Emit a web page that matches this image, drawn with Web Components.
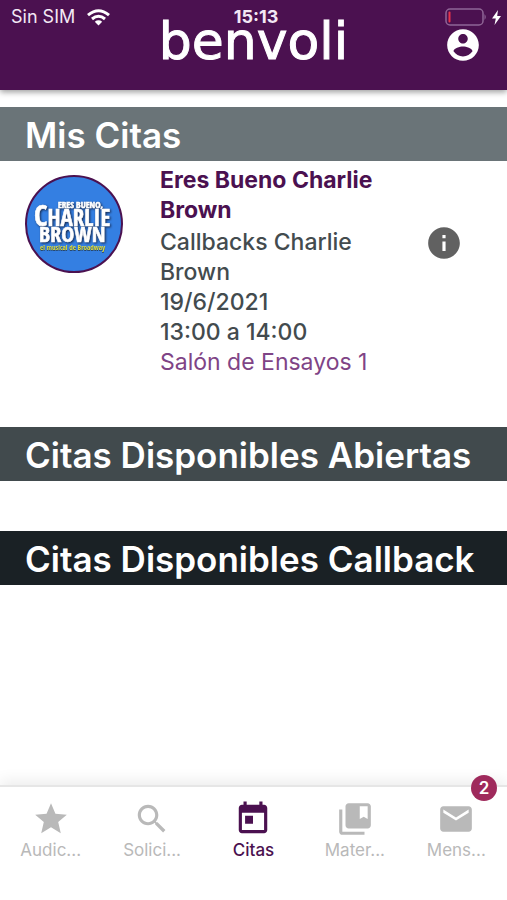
<!DOCTYPE html>
<html lang="es">
<head>
<meta charset="utf-8">
<meta name="viewport" content="width=device-width, initial-scale=1">
<title>benvoli - Citas</title>
<style>
    body {
        margin: 0;
        background: #ffffff;
        font-family: Inter, "Liberation Sans", sans-serif;
    }
</style>
</head>
<body>
<app-citas></app-citas>

<script>
// Barra de estado del teléfono
class BarraEstado extends HTMLElement {
    connectedCallback() {
        const shadowRoot = this.attachShadow({ mode: 'open' });
        shadowRoot.innerHTML = `
            <style>
                :host {
                    display: grid;
                    grid-template-columns: 1fr auto 1fr;
                    align-items: center;
                    height: 34px;
                    padding: 0 6px 0 11px;
                    font-size: 18px;
                    line-height: 18px;
                    color: #f3e8f5;
                }
                div { display: flex; align-items: center; gap: 12px; }
                .hora { font-weight: 700; }
                .pila { justify-content: flex-end; gap: 5px; }
                svg { display: block; }
            </style>
            <div>
                <span>Sin SIM</span>
                <svg width="23" height="17" viewBox="0 0 23 17" fill="none" stroke="#fff" stroke-width="3">
                    <path d="M1 6.2 Q11.500 -2.800 22 6.200"/>
                    <path d="M5 10 Q11.500 4.500 18 10"/>
                    <path d="M11.500 16.500 L7.800 12.700 Q11.500 9.800 15.200 12.700 Z" fill="#fff" stroke="none"/>
                </svg>
            </div>
            <span class="hora">15:13</span>
            <div class="pila">
                <svg width="42" height="18" viewBox="0 0 42 18">
                    <rect x="1" y="1" width="37" height="16" rx="4" fill="none" stroke="#8f6696" stroke-width="1.5"/>
                    <rect x="3.500" y="3.500" width="2" height="11" rx="1" fill="#e8334a"/>
                    <path d="M39.500 6 Q42 9 39.500 12 Z" fill="#8f6696"/>
                </svg>
                <svg width="9" height="15" viewBox="0 0 9 15"><path d="M6 0 L0 8.500 H3.800 L2.500 15 L9 6 H5.200 Z" fill="#fff"/></svg>
            </div>
        `;
    }
}
customElements.define("barra-estado", BarraEstado);

// Cabecera con el logo y el botón de perfil
class CabeceraApp extends HTMLElement {
    connectedCallback() {
        const shadowRoot = this.attachShadow({ mode: 'open' });
        shadowRoot.innerHTML = `
            <style>
                :host {
                    display: block;
                    position: relative;
                    z-index: 1;
                    background: #4b1150;
                    box-shadow: 0 2px 6px rgba(0, 0, 0, 0.4);
                }
                /* el estado flota sobre la cabecera */
                barra-estado { position: absolute; top: 0; left: 0; right: 0; }
                header {
                    display: grid;
                    grid-template-columns: 1fr auto 1fr;
                    align-items: center;
                    box-sizing: border-box;
                    height: 90px;
                    padding: 0 25px 8px;
                }
                .logo {
                    grid-column: 2;
                    font: 52px/60px "DejaVu Sans", sans-serif;
                    color: #ffffff;
                    -webkit-text-stroke: 1px #ffffff;
                }
                button {
                    justify-self: end;
                    margin-top: 8px;
                    padding: 0;
                    border: none;
                    background: none;
                    cursor: pointer;
                }
                svg { display: block; fill: #ffffff; }
            </style>
            <header>
                <span class="logo">benvoli</span>
                <button aria-label="Perfil">
                    <svg width="38" height="38" viewBox="0 0 24 24"><path d="M12 2C6.480 2 2 6.480 2 12s4.480 10 10 10 10-4.480 10-10S17.520 2 12 2zm0 3c1.660 0 3 1.340 3 3s-1.340 3-3 3-3-1.340-3-3 1.340-3 3-3zm0 14.200c-2.500 0-4.710-1.280-6-3.220.030-1.990 4-3.080 6-3.080 1.990 0 5.970 1.090 6 3.080-1.290 1.940-3.500 3.220-6 3.220z"/></svg>
                </button>
            </header>
            <barra-estado></barra-estado>
        `;
    }
}
customElements.define("cabecera-app", CabeceraApp);

// Franja con el título de cada sección
class TituloSeccion extends HTMLElement {
    connectedCallback() {
        const shadowRoot = this.attachShadow({ mode: 'open' });
        shadowRoot.innerHTML = `
            <style>
                :host { display: block; background: var(--fondo, #6a7478); }
                h2 {
                    margin: 0;
                    padding: 2px 25px 0;
                    font-size: 35px;
                    font-weight: 600;
                    line-height: 52px;
                    white-space: nowrap;
                    color: #ffffff;
                }
            </style>
            <h2><slot></slot></h2>
        `;
    }
}
customElements.define("titulo-seccion", TituloSeccion);

// Cartel redondo de la obra
class CartelObra extends HTMLElement {
    connectedCallback() {
        const shadowRoot = this.attachShadow({ mode: 'open' });
        shadowRoot.innerHTML = `
            <style>
                :host { display: block; }
                svg { display: block; font-family: "Liberation Sans Narrow", "Open Sans Condensed", "Liberation Sans", sans-serif; font-weight: bold; }
                .blanco { fill: #ffffff; stroke: #ffffff; stroke-width: 0.6; filter: drop-shadow(1px 1px 1px #17284b); }
                .lema { fill: #e2df3c; filter: drop-shadow(0 1px 0 #27405a); }
            </style>
            <svg width="98" height="98" viewBox="0 0 98 98">
                <circle cx="49" cy="49" r="48" fill="#347fe2" stroke="#4b1150" stroke-width="2"/>
                <g class="blanco">
                    <text x="33" y="33" font-size="9">ERES BUENO,</text>
                    <text x="9" y="51" font-size="23"><tspan font-size="29">C</tspan>HARLIE</text>
                    <text x="14" y="67" font-size="22">BROWN</text>
                </g>
                <text class="lema" x="15" y="75" font-size="7">el musical de Broadway</text>
            </svg>
        `;
    }
}
customElements.define("cartel-obra", CartelObra);

// Ficha de una cita
class FichaCita extends HTMLElement {
    connectedCallback() {
        const shadowRoot = this.attachShadow({ mode: 'open' });
        shadowRoot.innerHTML = `
            <style>
                :host {
                    display: grid;
                    grid-template-columns: 98px 1fr 57px;
                    column-gap: 37px;
                    align-items: start;
                    padding: 4px 25px 50px;
                    font-size: 23px;
                    line-height: 30px;
                    color: #434b4e;
                }
                cartel-obra { margin-top: 10px; }
                h3, p { margin: 0; font-size: inherit; }
                h3 { margin-bottom: 2px; font-weight: 700; color: #4b1150; }
                p { font-weight: 500; }
                .lugar { font-weight: 400; color: #7f4486; }
                button {
                    justify-self: start;
                    margin-top: 59px;
                    padding: 0;
                    border: none;
                    background: none;
                    cursor: pointer;
                }
                svg { display: block; fill: #616161; }
            </style>
            <cartel-obra></cartel-obra>
            <div>
                <h3><slot name="obra"></slot></h3>
                <p><slot name="cita"></slot></p>
                <p><slot name="fecha"></slot></p>
                <p><slot name="horario"></slot></p>
                <p class="lugar"><slot name="lugar"></slot></p>
            </div>
            <button aria-label="Información">
                <svg width="38" height="38" viewBox="0 0 24 24"><path d="M12 2C6.480 2 2 6.480 2 12s4.480 10 10 10 10-4.480 10-10S17.520 2 12 2zm1 15h-2v-6h2v6zm0-8h-2V7h2v2z"/></svg>
            </button>
        `;
    }
}
customElements.define("ficha-cita", FichaCita);

// Pestaña de la barra inferior
const iconos = {
    estrella: 'M12 17.270L18.180 21l-1.640-7.030L22 9.240l-7.190-.610L12 2 9.190 8.630 2 9.240l5.460 4.730L5.820 21z',
    lupa: 'M15.500 14h-.790l-.280-.270C15.410 12.590 16 11.110 16 9.500 16 5.910 13.090 3 9.500 3S3 5.910 3 9.500 5.910 16 9.500 16c1.610 0 3.090-.590 4.230-1.570l.270.280v.790l5 4.990L20.490 19l-4.990-5zm-6 0C7.010 14 5 11.990 5 9.500S7.010 5 9.500 5 14 7.010 14 9.500 11.990 14 9.500 14z',
    calendario: 'M19 3h-1V1h-2v2H8V1H6v2H5c-1.110 0-1.990.900-1.990 2L3 19c0 1.100.890 2 2 2h14c1.100 0 2-.900 2-2V5c0-1.100-.900-2-2-2zm0 16H5V8h14v11zM7 10h5v5H7z',
    libros: 'M4 6H2v14c0 1.100.900 2 2 2h14v-2H4V6zm16-4H8c-1.100 0-2 .900-2 2v12c0 1.100.900 2 2 2h12c1.100 0 2-.900 2-2V4c0-1.100-.900-2-2-2zm0 10l-2.500-1.500L15 12V4h5v8z',
    sobre: 'M20 4H4c-1.100 0-1.990.900-1.990 2L2 18c0 1.100.900 2 2 2h16c1.100 0 2-.900 2-2V6c0-1.100-.900-2-2-2zm0 4l-8 5-8-5V6l8 5 8-5v2z'
};

class PestanaApp extends HTMLElement {
    connectedCallback() {
        const aviso = this.getAttribute('aviso');
        const shadowRoot = this.attachShadow({ mode: 'open' });
        shadowRoot.innerHTML = `
            <style>
                :host { display: block; position: relative; color: #b9b9b9; }
                :host([activa]) { color: #4b1150; font-weight: 500; }
                a {
                    display: flex;
                    flex-direction: column;
                    align-items: center;
                    gap: 2px;
                    padding-top: 13px;
                    font-size: 17px;
                    line-height: 20px;
                    color: inherit;
                    text-decoration: none;
                }
                svg { display: block; fill: currentColor; }
                /* contador sobre la esquina de la pestaña */
                .aviso {
                    position: absolute;
                    top: -12px;
                    right: 10px;
                    width: 26px;
                    border-radius: 13px;
                    background: #9f2a5c;
                    color: #ffffff;
                    font-size: 17px;
                    font-weight: 600;
                    line-height: 26px;
                    text-align: center;
                }
            </style>
            <a href="#">
                <svg width="38" height="38" viewBox="0 0 24 24"><path d="${iconos[this.getAttribute('icono')]}"/></svg>
                <span><slot></slot></span>
            </a>
            ${aviso ? `<span class="aviso">${aviso}</span>` : ''}
        `;
    }
}
customElements.define("pestana-app", PestanaApp);

// Barra de pestañas
class BarraPestanas extends HTMLElement {
    connectedCallback() {
        const shadowRoot = this.attachShadow({ mode: 'open' });
        shadowRoot.innerHTML = `
            <style>
                :host {
                    display: block;
                    border-top: 2px solid #e6e6e6;
                    background: #ffffff;
                    box-shadow: 0 -4px 14px rgba(0, 0, 0, 0.08);
                }
                nav {
                    display: grid;
                    grid-template-columns: repeat(5, 1fr);
                    padding-bottom: 40px;
                }
            </style>
            <nav><slot></slot></nav>
        `;
    }
}
customElements.define("barra-pestanas", BarraPestanas);

// Pantalla de citas
class AppCitas extends HTMLElement {
    connectedCallback() {
        const shadowRoot = this.attachShadow({ mode: 'open' });
        shadowRoot.innerHTML = `
            <style>
                :host { display: flex; flex-direction: column; min-height: 100vh; }
                main { flex: 1; padding-top: 17px; }
                .abiertas { --fondo: #414a4d; margin-bottom: 50px; }
                .callback { --fondo: #1a2125; }
            </style>
            <cabecera-app></cabecera-app>
            <main>
                <titulo-seccion>Mis Citas</titulo-seccion>
                <ficha-cita>
                    <span slot="obra">Eres Bueno Charlie Brown</span>
                    <span slot="cita">Callbacks Charlie Brown</span>
                    <span slot="fecha">19/6/2021</span>
                    <span slot="horario">13:00 a 14:00</span>
                    <span slot="lugar">Salón de Ensayos 1</span>
                </ficha-cita>
                <titulo-seccion class="abiertas">Citas Disponibles Abiertas</titulo-seccion>
                <titulo-seccion class="callback">Citas Disponibles Callback</titulo-seccion>
            </main>
            <barra-pestanas>
                <pestana-app icono="estrella">Audic...</pestana-app>
                <pestana-app icono="lupa">Solici...</pestana-app>
                <pestana-app icono="calendario" activa>Citas</pestana-app>
                <pestana-app icono="libros">Mater...</pestana-app>
                <pestana-app icono="sobre" aviso="2">Mens...</pestana-app>
            </barra-pestanas>
        `;
    }
}
customElements.define("app-citas", AppCitas);
</script>
</body>
</html>
